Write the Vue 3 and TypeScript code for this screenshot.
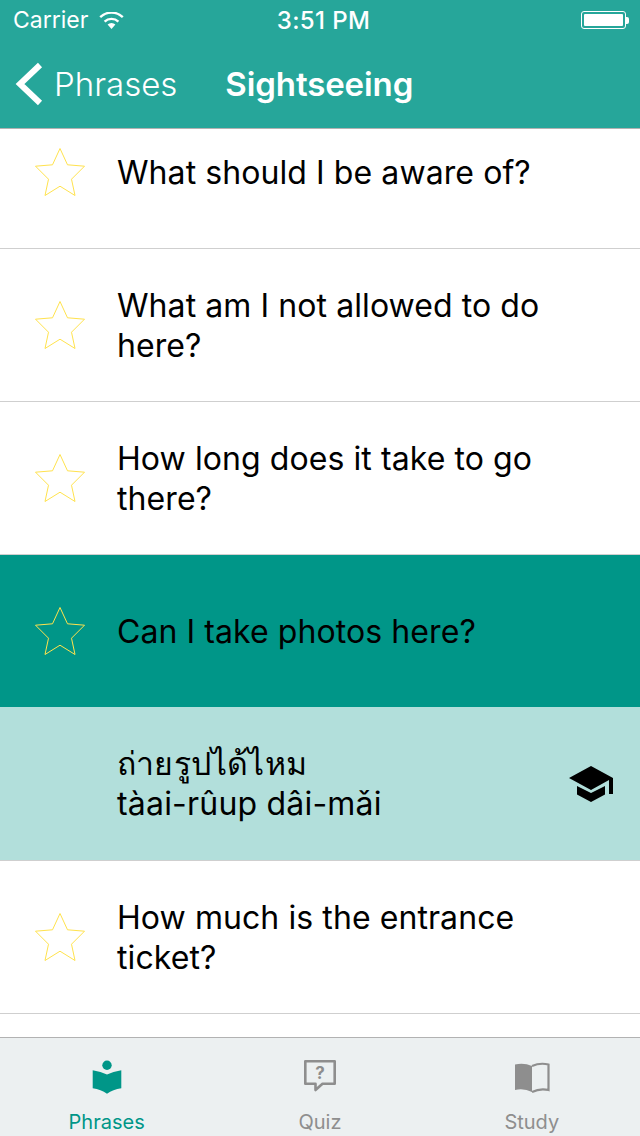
<script setup lang="ts">
interface Phrase {
  text: string
  sub?: string
  kind: 'plain' | 'active' | 'answer'
}

const phrases: Phrase[] = [
  { text: 'What should I be aware of?', kind: 'plain' },
  { text: 'What am I not allowed to do here?', kind: 'plain' },
  { text: 'How long does it take to go there?', kind: 'plain' },
  { text: 'Can I take photos here?', kind: 'active' },
  { text: 'ถ่ายรูปได้ไหม', sub: 'tàai-rûup dâi-mǎi', kind: 'answer' },
  { text: 'How much is the entrance ticket?', kind: 'plain' }
]
</script>

<template>
  <div class="screen">
    <header class="top">
      <div class="status">
        <div class="status-left">
          <span>Carrier</span>
          <svg class="wifi" width="25" height="17" viewBox="0 0 25 17">
            <path d="M12.5 17 8.6 12.6a5.6 5.6 0 0 1 7.8 0Z" fill="#fff" />
            <path d="M5.6 9.6a10 10 0 0 1 13.8 0" fill="none" stroke="#fff" stroke-width="2.4" />
            <path d="M1.2 5.2a16.2 16.2 0 0 1 22.6 0" fill="none" stroke="#fff" stroke-width="2.4" />
          </svg>
        </div>
        <span class="clock">3:51 PM</span>
        <div class="battery">
          <div class="battery-body"><div class="battery-fill"></div></div>
          <div class="battery-nub"></div>
        </div>
      </div>
      <nav class="nav">
        <svg class="chevron" width="28" height="44" viewBox="0 0 28 44">
          <path d="M25 3 5 22l20 19" fill="none" stroke="#fff" stroke-width="6" />
        </svg>
        <span class="back">Phrases</span>
        <span class="title">Sightseeing</span>
      </nav>
    </header>

    <main class="list">
      <div class="scroller">
        <div v-for="p in phrases" :key="p.text" class="row" :class="p.kind">
          <div class="star-cell">
            <svg v-if="p.kind !== 'answer'" width="50" height="48" viewBox="0 0 50 48">
              <path
                d="M25 .5 32.5 16.8 49.5 18.2 36.5 31.2 40 47.5 25 38.2 10 47.5 13.5 31.2 .5 18.2 17.5 16.8Z"
                fill="none"
                stroke="#ffe24d"
                stroke-width="1"
              />
            </svg>
          </div>
          <div class="copy">
            <div>{{ p.text }}</div>
            <div v-if="p.sub">{{ p.sub }}</div>
          </div>
          <svg v-if="p.kind === 'answer'" class="cap" width="44" height="36" viewBox="0 0 44 36">
            <path d="M22 0 44 12V28H40V14L22 24 0 12Z" fill="#000" />
            <path d="M8 20 22 27 36 20V28.5L22 36 8 28.5Z" fill="#000" />
          </svg>
        </div>
      </div>
    </main>

    <footer class="tabs">
      <div class="tab on">
        <svg width="30" height="36" viewBox="0 0 30 36">
          <circle cx="15" cy="5.3" r="4.7" fill="#009688" />
          <path d="M.7 10.3Q9 11.5 15 14.6 21 11.5 29.3 10.3V28.3Q21 29.5 15 33.7 9 29.5.7 28.3Z" fill="#009688" />
        </svg>
        <span>Phrases</span>
      </div>
      <div class="tab">
        <svg width="34" height="36" viewBox="0 0 34 36">
          <path d="M2.3 1.3H31.7V23.7H19.5L12.5 30V23.7H2.3Z" fill="none" stroke="#8e8e8e" stroke-width="2.6" stroke-linejoin="round" />
          <text x="17" y="18.500" text-anchor="middle" class="qmark">?</text>
        </svg>
        <span>Quiz</span>
      </div>
      <div class="tab study">
        <svg width="36" height="36" viewBox="0 0 36 36">
          <path d="M1 4.500Q10 2.500 18 6V32Q10 28 1 30Z" fill="#8e8e8e" />
          <path d="M18 6Q26 2.500 34.500 4.500V30Q26 28 18 32" fill="none" stroke="#8e8e8e" stroke-width="2.200" />
        </svg>
        <span>Study</span>
      </div>
    </footer>
  </div>
</template>

<style>
html,
body {
  margin: 0;
  background: #fff;
}
</style>

<style scoped>
.screen {
  width: 640px;
  height: 1136px;
  display: flex;
  flex-direction: column;
  overflow: hidden;
  font-family: Inter, "Noto Sans", "Liberation Sans", sans-serif;
  color: #000;
}

.top {
  height: 128px;
  flex: none;
  background: #26a69a;
  border-bottom: 1px solid #b2b2b2;
  color: #fff;
}

.status {
  height: 40px;
  padding: 0 11px 0 13px;
  display: flex;
  align-items: center;
  justify-content: space-between;
  font-size: 23px;
}

.status-left {
  width: 200px;
  display: flex;
  align-items: center;
  gap: 11px;
}

.clock {
  font-size: 24px;
  font-weight: 500;
  letter-spacing: 0.4px;
  margin-left: 5px;
}

.battery {
  width: 200px;
  display: flex;
  align-items: center;
  justify-content: flex-end;
}

.battery-body {
  width: 45px;
  height: 18px;
  box-sizing: border-box;
  border: 1px solid #fff;
  border-radius: 3px;
  padding: 2px;
}

.battery-fill {
  height: 100%;
  background: #fff;
  border-radius: 1px;
}

.battery-nub {
  width: 3px;
  height: 7px;
  background: #fff;
  border-radius: 0 2px 2px 0;
}

.nav {
  height: 88px;
  display: flex;
  align-items: center;
  padding-left: 15px;
  font-size: 33px;
}

.back {
  margin-left: 11px;
  font-weight: 300;
}

.title {
  margin-left: 48px;
  font-weight: 600;
  letter-spacing: -0.1px;
}

.list {
  flex: 1;
  min-height: 0;
  overflow: hidden;
  background: #fff;
}

.scroller {
  margin-top: -33px;
}

.row {
  height: 153px;
  box-sizing: border-box;
  display: flex;
  align-items: center;
  border-bottom: 1px solid #cfcfcf;
  font-size: 32px;
  letter-spacing: 0.08px;
  line-height: 40px;
}

.row.active {
  background: #009688;
  border-bottom-color: #b2dfdb;
}

.row.answer {
  background: #b2dfdb;
}

.star-cell {
  width: 117px;
  flex: none;
  padding-left: 34.5px;
  box-sizing: border-box;
  display: flex;
}

.copy {
  flex: 1;
  padding: 2px 60px 0 0;
}

.answer .copy {
  padding: 0;
  letter-spacing: 0.2px;
}

.cap {
  flex: none;
  margin-right: 27px;
}

.tabs {
  height: 99px;
  flex: none;
  box-sizing: border-box;
  background: #ecf0f1;
  border-top: 1px solid #b2b2b2;
  display: grid;
  grid-template-columns: repeat(3, 1fr);
}

.tab {
  display: flex;
  flex-direction: column;
  align-items: center;
  padding-top: 22px;
  gap: 14px;
  font-size: 20px;
  line-height: 24px;
  color: #8e8e8e;
}

.tab.on {
  color: #009688;
}

.tab.study {
  padding-right: 3px;
}

.qmark {
  font-size: 17px;
  font-weight: 700;
  fill: #8e8e8e;
}
</style>
